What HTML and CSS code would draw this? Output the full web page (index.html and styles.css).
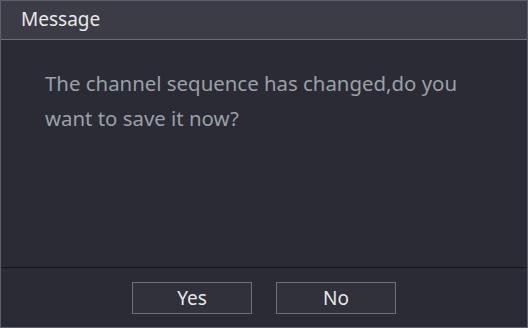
FILE: index.html
```html
<!DOCTYPE html>
<html lang="en">
  <head>
    <meta charset="UTF-8" />
    <meta name="viewport" content="width=device-width, initial-scale=1.0" />
    <title>Message</title>
    <link rel="stylesheet" href="styles.css">
  </head>
  <body>
    <div class="dialog">
      <div class="dialog-header">Message</div>
      <div class="dialog-body">
        <p class="dialog-text">The channel sequence has changed,do you want to save it now?</p>
      </div>
      <div class="dialog-footer">
        <button class="dialog-button">Yes</button>
        <button class="dialog-button">No</button>
      </div>
    </div>
  </body>
</html>
```

FILE: styles.css
```css
body {
  margin: 0px;
  background-color: rgb(42, 43, 52);
  font-family: 'Noto Sans', sans-serif;
}

.dialog {
  width: 528px;
  height: 328px;
  box-sizing: border-box;
  border: 1px solid rgb(91, 97, 107);
  background-color: rgb(42, 43, 52);

  display: flex;
  flex-direction: column;
}

.dialog-header {
  height: 38px;
  border-bottom: 1px solid rgb(106, 108, 117);
  background-color: rgb(59, 60, 70);
  color: rgb(232, 232, 234);
  font-size: 19px;
  line-height: 37px;
  padding-left: 20px;
}

.dialog-body {
  flex: 1;
  padding: 26px 40px 0px 44px;
}

.dialog-text {
  margin: 0px;
  color: rgb(155, 160, 168);
  font-size: 20.4px;
  line-height: 35px;
}

.dialog-footer {
  height: 59px;
  border-top: 1px solid rgb(21, 22, 28);

  display: flex;
  justify-content: center;
  align-items: flex-start;
  gap: 24px;
}

.dialog-button {
  margin-top: 14px;
  width: 120px;
  height: 32px;
  border: 1px solid rgb(110, 113, 120);
  background-color: rgb(48, 49, 58);
  color: rgb(232, 232, 234);
  font-family: 'Noto Sans', sans-serif;
  font-size: 19px;
  padding: 0px;
  cursor: pointer;
}
```
